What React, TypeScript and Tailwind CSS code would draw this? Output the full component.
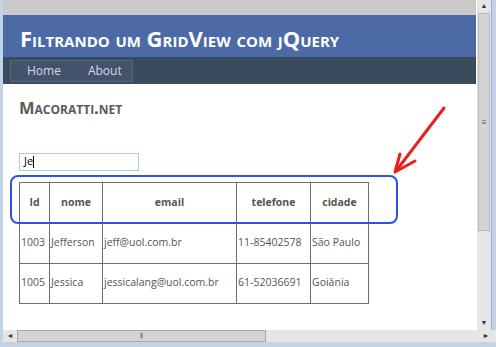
import React from "react";

const rows = [
  { id: "1003", nome: "Jefferson", email: "jeff@uol.com.br", telefone: "11-85402578", cidade: "São Paulo" },
  { id: "1005", nome: "Jessica", email: "jessicalang@uol.com.br", telefone: "61-52036691", cidade: "Goiânia" },
];

const cols = [
  { key: "id", label: "Id", w: "w-[30px]" },
  { key: "nome", label: "nome", w: "w-[53px]" },
  { key: "email", label: "email", w: "w-[134px]" },
  { key: "telefone", label: "telefone", w: "w-[74px]" },
  { key: "cidade", label: "cidade", w: "w-[58px]" },
] as const;

function Arrow() {
  return (
    <svg className="absolute left-[385px] top-[104px]" width="62" height="74" viewBox="0 0 62 74" fill="none">
      <path d="M56 4 L8 67" stroke="#e8201e" strokeWidth="3" strokeLinecap="round" />
      <path d="M7 68 L12 50 M7 68 L27 57" stroke="#e8201e" strokeWidth="3" strokeLinecap="round" />
    </svg>
  );
}

export default function App() {
  return (
    <div
      className="w-[496px] h-[347px] flex flex-col overflow-hidden bg-white"
      style={{ fontFamily: '"Open Sans", "Noto Sans", sans-serif' }}
    >
      <div className="flex flex-1 min-h-0">
        {/* left window edge */}
        <div className="w-[3px] bg-[#c3d3e6]" />

        {/* page */}
        <div className="flex-1 flex flex-col relative">
          <div className="h-[15px] bg-[#c9c9c9]" />
          <div className="h-[42px] bg-[#4b6aa6] flex items-center pl-[17px] pt-[3px]">
            <h1 className="text-white font-bold text-[22px] leading-none [font-variant:small-caps]">
              Filtrando um GridView com jQuery
            </h1>
          </div>
          <div className="h-[27px] bg-[#394b5c] flex items-center pl-[7px]">
            <div className="h-[22px] w-[123px] bg-[#43536c] border border-[#56667e] flex items-center text-[12px] text-[#d4dae4]">
              <span className="ml-[16px]">Home</span>
              <span className="ml-[27px]">About</span>
            </div>
          </div>

          <div className="flex-1 pl-[16px] pt-[16px]">
            <div className="text-[#5a5a5a] font-bold text-[16.5px] leading-none [font-variant:small-caps]">
              Macoratti.net
            </div>
            <div className="mt-[36px] w-[120px] h-[18px] border border-[#a6cfe6] flex items-center pl-[4px] text-[11px] text-black">
              Je<span className="w-px h-[12px] bg-black" />
            </div>
            <table className="mt-[11px] border-collapse text-[10.5px] text-[#555]">
              <thead>
                <tr className="h-[41px]">
                  {cols.map((c) => (
                    <th key={c.key} className={`${c.w} border border-[#6e6e6e] font-bold text-center`}>
                      {c.label}
                    </th>
                  ))}
                </tr>
              </thead>
              <tbody>
                {rows.map((r) => (
                  <tr key={r.id} className="h-[40px]">
                    {cols.map((c) => (
                      <td key={c.key} className="border border-[#6e6e6e] pl-px text-left">
                        {r[c.key]}
                      </td>
                    ))}
                  </tr>
                ))}
              </tbody>
            </table>
          </div>

          {/* annotations */}
          <div className="absolute left-[7px] top-[175px] w-[388px] h-[49px] border-2 border-[#3050ee] rounded-[8px]" />
          <Arrow />
        </div>

        {/* vertical scrollbar */}
        <div className="w-[15px] bg-[#e6e6e6] flex flex-col border-l border-white">
          <div className="h-[13px] flex items-center justify-center text-[7px] text-[#333]">▲</div>
          <div className="h-[218px] mx-[1px] bg-[#d4d4d4] border border-[#b8b8b8] flex items-center justify-center text-[8px] text-[#555]">
            ≡
          </div>
          <div className="flex-1" />
          <div className="h-[13px] flex items-center justify-center text-[7px] text-[#333]">▼</div>
        </div>
        <div className="w-[5px] bg-[#c3d3e6] border-l border-[#a0b0c8]" />
      </div>

      {/* horizontal scrollbar */}
      <div className="h-[12px] flex bg-[#e6e6e6]">
        <div className="w-[3px] bg-[#c3d3e6]" />
        <div className="w-[14px] flex items-center justify-center text-[7px] text-[#333]">◄</div>
        <div className="w-[249px] bg-[#d4d4d4] border border-[#a8a8a8] flex items-center justify-center text-[7px] text-[#555]">
          ⦀
        </div>
        <div className="flex-1" />
        <div className="w-[20px] flex items-center justify-center text-[7px] text-[#333]">►</div>
      </div>
      <div className="h-[5px] bg-[#c3d3e6]" />
    </div>
  );
}
